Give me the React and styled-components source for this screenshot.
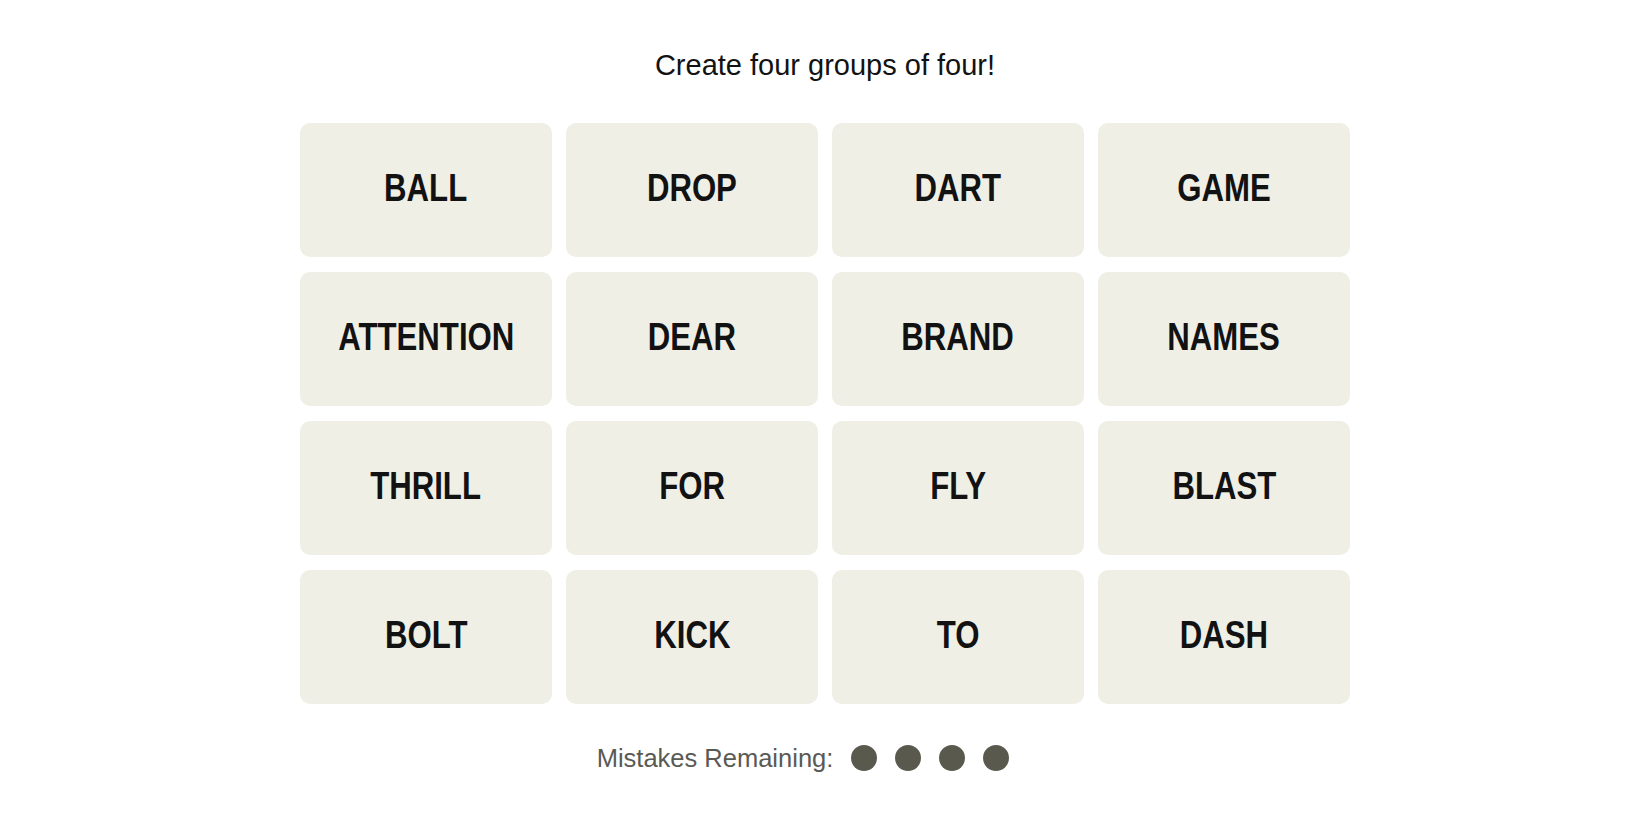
import React from 'react'
import styled, { createGlobalStyle } from 'styled-components'

const words = [
  'BALL', 'DROP', 'DART', 'GAME',
  'ATTENTION', 'DEAR', 'BRAND', 'NAMES',
  'THRILL', 'FOR', 'FLY', 'BLAST',
  'BOLT', 'KICK', 'TO', 'DASH',
]

const GlobalStyle = createGlobalStyle`
  html, body {
    margin: 0;
    padding: 0;
    background: #ffffff;
  }
  body {
    font-family: 'Liberation Sans', Arial, sans-serif;
  }
`

const Page = styled.main`
  display: flex;
  flex-direction: column;
  align-items: center;
  padding-top: 50px;
`

const Prompt = styled.p`
  margin: 0 0 43px;
  font-size: 29px;
  line-height: 30px;
  font-weight: 400;
  color: #121212;
`

const Board = styled.section`
  display: grid;
  grid-template-columns: repeat(4, 252px);
  grid-auto-rows: 134px;
  column-gap: 14px;
  row-gap: 15px;
`

const Tile = styled.button`
  display: flex;
  align-items: center;
  justify-content: center;
  padding: 0;
  border: none;
  border-radius: 10px;
  background: #efefe6;
  color: #121212;
  cursor: pointer;
`

// narrow bold face is not installed, so squeeze Arial-width bold to Franklin's width
const Label = styled.span`
  display: inline-block;
  font-family: 'Liberation Sans', Arial, sans-serif;
  font-weight: 700;
  font-size: 38px;
  transform: scaleX(0.82);
  margin-top: -4px;
`

const Mistakes = styled.div`
  display: flex;
  align-items: center;
  margin-top: 39px;
  font-size: 25.5px;
  line-height: 30px;
  color: #5a5a55;
`

const Dots = styled.div`
  display: flex;
  gap: 18px;
  margin-left: 18px;
  padding-right: 44px;
`

const Dot = styled.span`
  width: 26px;
  height: 26px;
  border-radius: 50%;
  background: #5a594e;
`

const App = () => {
  return (
    <>
      <GlobalStyle />
      <Page>
        <Prompt>Create four groups of four!</Prompt>
        <Board>
          {words.map((w) => (
            <Tile key={w}>
              <Label>{w}</Label>
            </Tile>
          ))}
        </Board>
        <Mistakes>
          Mistakes Remaining:
          <Dots>
            {[0, 1, 2, 3].map((i) => (
              <Dot key={i} />
            ))}
          </Dots>
        </Mistakes>
      </Page>
    </>
  )
}

export default App
